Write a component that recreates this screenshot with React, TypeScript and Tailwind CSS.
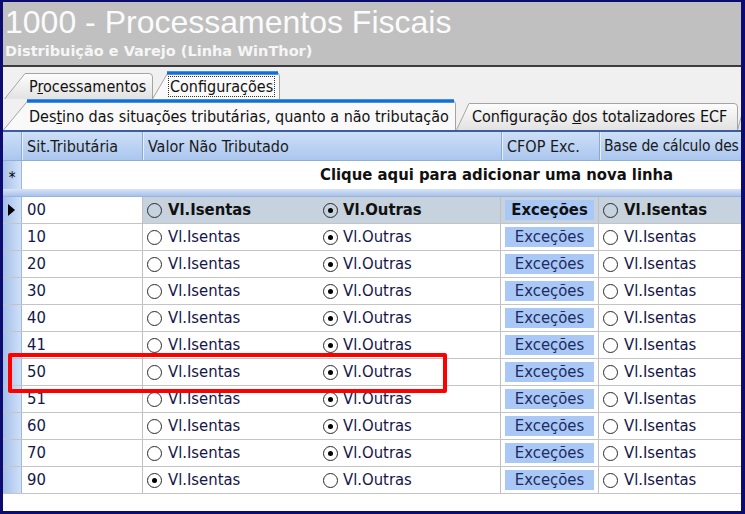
import React from 'react';

type Row = { code: string; isentas: boolean; selected?: boolean };

const rows: Row[] = [
  { code: '00', isentas: false, selected: true },
  { code: '10', isentas: false },
  { code: '20', isentas: false },
  { code: '30', isentas: false },
  { code: '40', isentas: false },
  { code: '41', isentas: false },
  { code: '50', isentas: false },
  { code: '51', isentas: false },
  { code: '60', isentas: false },
  { code: '70', isentas: false },
  { code: '90', isentas: true },
];

// radio button like the old windows grid ones
const Radio = ({ checked }: { checked: boolean }) => (
  <span className="w-[15px] h-[15px] rounded-full border-[1.5px] border-[#2a2a2a] flex items-center justify-center shrink-0">
    {checked && <span className="w-[5px] h-[5px] rounded-full bg-black" />}
  </span>
);

type TabProps = {
  label: React.ReactNode;
  w: number;
  h: number;
  slant: number;
  selected?: boolean;
  className: string;
  textClass: string;
};

const Tab = ({ label, w, h, slant, selected, className, textClass }: TabProps) => (
  <div className={`relative shrink-0 ${className}`}>
    <svg className="absolute inset-0" width={w} height={h}>
      <defs>
        <linearGradient id="tabg" x1="0" y1="0" x2="0" y2="1">
          <stop offset="0" stopColor="#fdfdfd" />
          <stop offset="1" stopColor="#e2e2e2" />
        </linearGradient>
      </defs>
      <path
        d={`M0.5,${h} L${slant},1.5 L${w - 5},1.5 Q${w - 1.5},1.5 ${w - 1.5},5 L${w - 1.5},${h}`}
        fill={selected ? '#f9f9f9' : 'url(#tabg)'}
        stroke="#a4a4a4"
        strokeWidth="1"
      />
      {selected && <path d={`M${slant - 1},2 L${w - 3},2`} stroke="#1170d8" strokeWidth="3.5" />}
    </svg>
    <div className={`relative whitespace-nowrap ${textClass}`}>{label}</div>
  </div>
);

const App = () => {
  return (
    <div className="w-[745px] h-[514px] relative overflow-hidden bg-white border-l-[3px] border-r-[4px] border-t-[2px] border-b-[3px] border-[#0b0b70] flex flex-col [font-family:'DejaVu_Sans_Condensed','DejaVu_Sans',sans-serif] [font-stretch:condensed]">
      {/* Title bar */}
      <div className="h-[65px] shrink-0 bg-[#c0c0c0] border-b-2 border-[#3c3c3c] pl-[2px] text-white">
        <div className="pt-[2px] leading-[36px] text-[32px] [font-family:'Liberation_Sans',Arial,sans-serif] [font-stretch:normal] text-[#fbfbfb]">
          1000 - Processamentos Fiscais
        </div>
        <div className="pt-[2px] leading-[18px] text-[14.5px] font-bold text-[#f6f6f6] [font-family:'DejaVu_Sans',sans-serif] [font-stretch:normal]">
          Distribuição e Varejo (Linha WinThor)
        </div>
      </div>

      {/* Tabs row 1 */}
      <div className="h-[32px] shrink-0 bg-[#f0f0f0] flex items-end text-[16px] text-[#111]">
        <Tab
          label={
            <>
              P<span className="underline">r</span>ocessamentos
            </>
          }
          w={150}
          h={27}
          slant={21}
          className="w-[150px] h-[27px] ml-[1px]"
          textClass="pl-[25px] pt-[5px] leading-[20px]"
        />
        <Tab
          label={<span className="outline outline-1 outline-dotted outline-[#333] px-[1px]">Configurações</span>}
          w={129}
          h={28}
          slant={16}
          selected
          className="w-[129px] h-[28px] -ml-[2px]"
          textClass="pl-[17px] pt-[7px] leading-[18px]"
        />
      </div>

      {/* Tabs row 2 */}
      <div className="h-[31px] shrink-0 bg-[#f0f0f0] flex items-end text-[16px] text-[#111]">
        <Tab
          label={
            <>
              Des<span className="underline">t</span>ino das situações tributárias, quanto a não tributação
            </>
          }
          w={454}
          h={31}
          slant={25}
          selected
          className="w-[454px] h-[31px]"
          textClass="pl-[26px] pt-[8px] leading-[20px]"
        />
        <Tab
          label={
            <>
              Configuração <span className="underline">d</span>os totalizadores ECF
            </>
          }
          w={283}
          h={28}
          slant={13}
          className="w-[283px] h-[28px] -ml-[1px]"
          textClass="pl-[16px] pt-[5px] leading-[20px]"
        />
        <Tab label="" w={10} h={28} slant={8} className="w-[10px] h-[28px] -ml-[2px]" textClass="" />
      </div>

      {/* Grid */}
      <div className="flex-1 flex flex-col border-t-[2px] border-[#3d5da0] text-[16.5px]">
        {/* header */}
        <div className="h-[29px] shrink-0 flex bg-gradient-to-b from-[#cddff7] to-[#abc6ee] border-b border-[#8eaedc] text-[16px] text-[#1a1a1a] leading-[29px]">
          <div className="w-[19px] shrink-0 border-r border-[#8ca8d6]" />
          <div className="w-[121px] shrink-0 border-r border-[#8ca8d6] shadow-[inset_1px_0_0_#e6effc] pl-[5px]">Sit.Tributária</div>
          <div className="w-[359px] shrink-0 border-r border-[#8ca8d6] shadow-[inset_1px_0_0_#e6effc] pl-[5px]">Valor Não Tributado</div>
          <div className="w-[98px] shrink-0 border-r border-[#8ca8d6] shadow-[inset_1px_0_0_#e6effc] pl-[5px]">CFOP Exc.</div>
          <div className="flex-1 whitespace-nowrap overflow-hidden shadow-[inset_1px_0_0_#e6effc] pl-[4px] text-[15.5px] tracking-[-0.2px]">
            Base de cálculo des
          </div>
        </div>

        {/* new row line */}
        <div className="h-[28px] shrink-0 flex bg-white">
          <div className="w-[19px] shrink-0 bg-gradient-to-r from-[#a9c3ea] to-[#d3e2f8] border-r border-[#9fb8e0] flex items-center justify-center text-[15px] text-black pt-[6px]">
            *
          </div>
          <div className="flex-1 pl-[298px] leading-[28px] font-bold text-[#111] whitespace-nowrap">Clique aqui para adicionar uma nova linha</div>
        </div>
        <div className="h-[8px] shrink-0 bg-gradient-to-b from-[#d6e4f8] to-[#a9c2ea] border-b border-[#9ab4de]" />

        {/* data rows */}
        {rows.map((r) => {
          const sel = !!r.selected;
          return (
            <div
              key={r.code}
              className={`h-[27px] shrink-0 flex border-b border-[#c4c4c4] ${sel ? 'bg-[#c6d2de] font-bold text-[#111]' : 'bg-white text-[#16164a]'}`}
            >
              <div className="w-[19px] shrink-0 bg-gradient-to-r from-[#a3bfe9] to-[#d0e0f8] border-r border-[#9fb8e0] flex items-center pl-[5px]">
                {sel && <span className="w-0 h-0 border-y-[6px] border-y-transparent border-l-[7px] border-l-black" />}
              </div>
              <div className={`w-[121px] shrink-0 border-r border-[#c0c0c0] pl-[5px] leading-[26px] font-normal ${sel ? 'bg-white text-[#16164a]' : ''}`}>
                {r.code}
              </div>
              <div className="w-[175px] shrink-0 flex items-center gap-[6px] pl-[4px] leading-[26px]">
                <Radio checked={r.isentas} />
                <span>Vl.Isentas</span>
              </div>
              <div className="w-[183px] shrink-0 border-r border-[#c0c0c0] flex items-center gap-[5px] pl-[5px] leading-[26px]">
                <Radio checked={!r.isentas} />
                <span>Vl.Outras</span>
              </div>
              <div className="w-[98px] shrink-0 border-r border-[#c0c0c0] flex items-center px-[4px] py-[3px]">
                <div className={`w-full h-full bg-[#a9c8f6] flex items-center justify-center leading-[20px] ${sel ? 'text-[#111]' : 'text-[#1e2b5e]'}`}>
                  Exceções
                </div>
              </div>
              <div className="flex-1 flex items-center gap-[6px] pl-[4px] leading-[26px] whitespace-nowrap overflow-hidden">
                <Radio checked={false} />
                <span>Vl.Isentas</span>
              </div>
            </div>
          );
        })}
        <div className="flex-1 bg-white" />
      </div>

      {/* highlight box */}
      <div className="absolute left-[5px] top-[351px] w-[439px] h-[40px] border-[4px] border-[#ff0000] rounded-[2px] pointer-events-none" />
    </div>
  );
};

export default App;
